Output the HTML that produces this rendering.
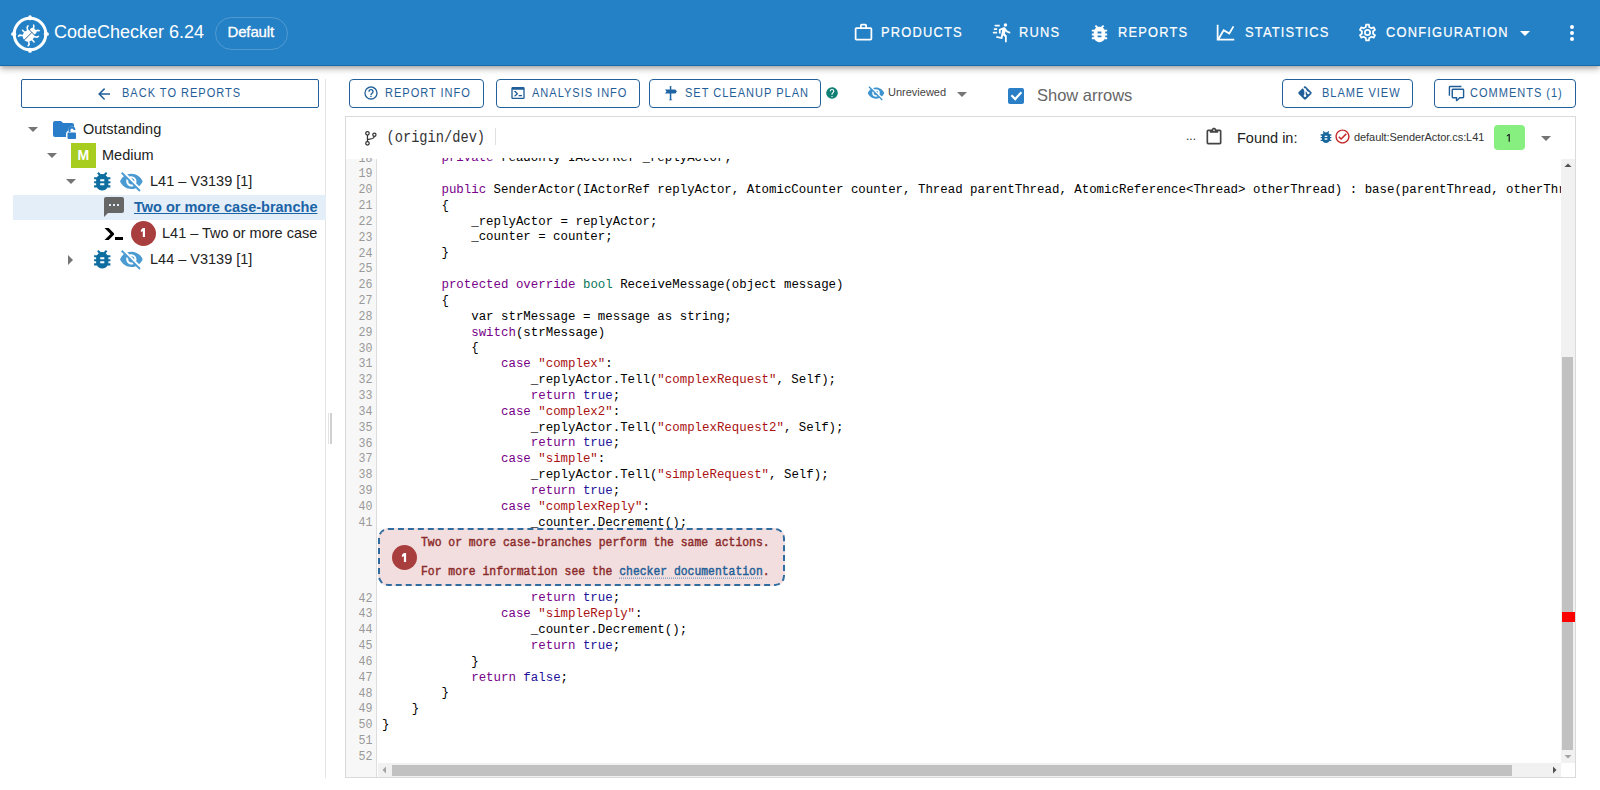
<!DOCTYPE html>
<html><head><meta charset="utf-8">
<style>
*{box-sizing:border-box;margin:0;padding:0}
html,body{width:1600px;height:790px;overflow:hidden;background:#fff;font-family:"Liberation Sans",sans-serif;position:relative}
.abs{position:absolute}
.t{position:absolute;white-space:nowrap;line-height:0}
svg{position:absolute;display:block}
/* header */
#hdr{position:absolute;left:0;top:0;width:1600px;height:66px;background:#2581c6;border-bottom:1px solid #1b69ad;box-shadow:0 2px 4px -1px rgba(0,0,0,.2),0 4px 5px 0 rgba(0,0,0,.14),0 1px 10px 0 rgba(0,0,0,.12);z-index:5}
.nav{position:absolute;color:#fff;font-size:14px;letter-spacing:1.3px;transform:scaleX(0.92);transform-origin:0 0;-webkit-text-stroke:0.2px #fff;line-height:0;white-space:nowrap;font-weight:normal}
.btn{position:absolute;border:1px solid #22609b;border-radius:4px;background:#fff}
.btxt{position:absolute;color:#1f5e98;font-size:12px;letter-spacing:1.07px;transform:scaleX(0.92);transform-origin:0 0;line-height:0;white-space:nowrap}
.tree{position:absolute;font-size:14.5px;color:#222;line-height:0;white-space:nowrap}
/* code */
#cv{position:absolute;left:345px;top:116px;width:1231px;height:662px;border:1px solid #dadada;background:#fff}
#vp{position:absolute;left:346px;top:158px;width:1215px;height:605px;overflow:hidden}
#gut{position:absolute;left:0;top:0.5px;width:31px;height:605px;background:#f7f7f7;border-right:1px solid #ddd}
.cl{position:absolute;left:35.9px;padding-top:1.3px;height:15.83px;line-height:15.83px;font-family:"Liberation Mono",monospace;font-size:12.42px;color:#000;white-space:pre}
.ln{position:absolute;left:0;width:26.5px;text-align:right;height:15.83px;line-height:15.83px;font-family:"Liberation Mono",monospace;font-size:11.6px;color:#999;white-space:pre;transform:scaleY(1.14)}
.ck{color:#770088}.ct{color:#07775a}.cs{color:#aa1111}.ca{color:#221199}
</style></head><body>

<!-- HEADER -->
<div id="hdr">
  <svg style="left:9.6px;top:13.6px" width="40" height="40" viewBox="-20 -20 40 40">
    <circle cx="0" cy="0" r="15.8" fill="none" stroke="#fff" stroke-width="3"/>
    <rect x="-1.7" y="-18.8" width="3.4" height="5" rx="1.5" fill="#fff"/>
    <rect x="-1.7" y="13.8" width="3.4" height="5" rx="1.5" fill="#fff"/>
    <rect x="-18.8" y="-1.7" width="5" height="3.4" rx="1.5" fill="#fff"/>
    <rect x="13.8" y="-1.7" width="5" height="3.4" rx="1.5" fill="#fff"/>
    <g transform="translate(0,0.3) rotate(45) scale(0.82)">
      <ellipse cx="0" cy="2.6" rx="6.8" ry="7.4" fill="#fff"/>
      <ellipse cx="0" cy="-5.6" rx="4.4" ry="3.2" fill="#fff"/>
      <g stroke="#fff" stroke-width="1.9" fill="none" stroke-linecap="round">
        <path d="M-2.2,-8 Q-3,-10.5 -4.8,-11"/><path d="M2.2,-8 Q3,-10.5 4.8,-11"/>
        <path d="M-5.5,-1.5 L-8.5,-3.5 L-9,-5.5"/><path d="M5.5,-1.5 L8.5,-3.5 L9,-5.5"/>
        <path d="M-6.5,3 L-10,3"/><path d="M6.5,3 L10,3"/>
        <path d="M-5.3,7.5 L-8,9.5 L-8.3,11.5"/><path d="M5.3,7.5 L8,9.5 L8.3,11.5"/>
      </g>
      <path d="M-4.4,-3.2 L4.4,-3.2 M0,-3.2 L0,10" stroke="#1d4f7a" stroke-width="1" fill="none"/>
    </g>
  </svg>
  <div class="t" style="left:54px;top:32px;font-size:18px;color:#fff">CodeChecker 6.24</div>
  <div class="abs" style="left:214.5px;top:16.5px;width:73px;height:33px;border:1px solid rgba(255,255,255,.2);border-radius:17px"></div>
  <div class="t" style="left:227.5px;top:32.4px;font-size:15px;color:#fff;-webkit-text-stroke:0.3px #fff;letter-spacing:-0.15px">Default</div>

  <!-- nav -->
  <svg style="left:853px;top:22px" width="21" height="21" viewBox="0 0 24 24"><path fill="#fff" d="M10,2H14A2,2 0 0,1 16,4V6H20A2,2 0 0,1 22,8V19A2,2 0 0,1 20,21H4C2.89,21 2,20.1 2,19V8C2,6.89 2.89,6 4,6H8V4C8,2.89 8.89,2 10,2M14,6V4H10V6H14M4,8V19H20V8H4Z"/></svg>
  <div class="nav" style="left:881px;top:32px">PRODUCTS</div>
  <svg style="left:991px;top:22px" width="21" height="21" viewBox="0 0 24 24"><path fill="#fff" d="M16.5,5.5A2,2 0 0,0 18.5,3.5A2,2 0 0,0 16.5,1.5A2,2 0 0,0 14.5,3.5A2,2 0 0,0 16.5,5.5M12.9,19.4L13.9,15L16,17V23H18V15.5L15.9,13.5L16.5,10.5C17.89,12.09 19.89,13 22,13V11C20.24,11.03 18.6,10.11 17.7,8.6L16.7,7C16.34,6.4 15.7,6 15,6C14.7,6 14.5,6.1 14.2,6.1L9,8.3V13H11V9.6L12.8,8.9L11.2,17L6.3,16L5.9,18L12.9,19.4M4,9A1,1 0 0,1 3,8A1,1 0 0,1 4,7H7V9H4M5,5A1,1 0 0,1 4,4A1,1 0 0,1 5,3H10V5H5M3,13A1,1 0 0,1 2,12A1,1 0 0,1 3,11H7V13H3Z"/></svg>
  <div class="nav" style="left:1019px;top:32px">RUNS</div>
  <svg style="left:1088px;top:21.5px" width="23" height="23" viewBox="0 0 24 24"><path fill="#fff" d="M14,12H10V10H14M14,16H10V14H14M20,8H17.19C16.74,7.22 16.12,6.55 15.37,6.04L17,4.41L15.59,3L13.42,5.17C12.96,5.06 12.5,5 12,5C11.5,5 11.04,5.06 10.59,5.17L8.41,3L7,4.41L8.62,6.04C7.88,6.55 7.26,7.22 6.81,8H4V10H6.09C6.04,10.33 6,10.66 6,11V12H4V14H6V15C6,15.34 6.04,15.67 6.09,16H4V18H6.81C7.85,19.79 9.78,21 12,21C14.22,21 16.150,19.79 17.19,18H20V16H17.91C17.96,15.67 18,15.34 18,15V14H20V12H18V11C18,10.66 17.96,10.33 17.91,10H20V8Z"/></svg>
  <div class="nav" style="left:1118px;top:32px">REPORTS</div>
  <svg style="left:1215px;top:22px" width="21" height="21" viewBox="0 0 24 24"><path fill="#fff" d="M16,11.78L20.24,4.45L21.97,5.45L16.74,14.5L10.23,10.75L5.46,19H22V21H2V3H4V17.54L9.5,8L16,11.78Z"/></svg>
  <div class="nav" style="left:1245px;top:32px">STATISTICS</div>
  <svg style="left:1357px;top:22px" width="21" height="21" viewBox="0 0 24 24"><path fill="#fff" d="M12,8A4,4 0 0,1 16,12A4,4 0 0,1 12,16A4,4 0 0,1 8,12A4,4 0 0,1 12,8M12,10A2,2 0 0,0 10,12A2,2 0 0,0 12,14A2,2 0 0,0 14,12A2,2 0 0,0 12,10M10,22C9.75,22 9.54,21.82 9.5,21.58L9.13,18.93C8.5,18.68 7.96,18.34 7.44,17.94L4.95,18.95C4.73,19.03 4.46,18.95 4.34,18.73L2.34,15.27C2.21,15.05 2.27,14.78 2.46,14.63L4.57,12.97L4.5,12L4.57,11L2.46,9.37C2.27,9.22 2.21,8.95 2.34,8.73L4.34,5.27C4.46,5.05 4.73,4.96 4.95,5.05L7.44,6.05C7.96,5.66 8.5,5.32 9.13,5.07L9.5,2.42C9.54,2.18 9.75,2 10,2H14C14.25,2 14.46,2.18 14.5,2.42L14.87,5.07C15.5,5.32 16.04,5.66 16.56,6.05L19.05,5.05C19.27,4.96 19.54,5.05 19.66,5.27L21.66,8.73C21.79,8.95 21.73,9.22 21.54,9.37L19.43,11L19.5,12L19.43,13L21.54,14.63C21.73,14.78 21.79,15.05 21.66,15.27L19.66,18.73C19.54,18.95 19.27,19.04 19.05,18.95L16.56,17.95C16.04,18.34 15.5,18.68 14.87,18.93L14.5,21.58C14.46,21.82 14.25,22 14,22H10M11.25,4L10.88,6.61C9.68,6.86 8.62,7.5 7.85,8.39L5.44,7.35L4.69,8.65L6.8,10.2C6.4,11.37 6.4,12.64 6.8,13.8L4.68,15.36L5.43,16.66L7.86,15.62C8.63,16.5 9.68,17.14 10.87,17.38L11.24,20H12.76L13.13,17.39C14.32,17.14 15.37,16.5 16.14,15.62L18.57,16.66L19.32,15.36L17.2,13.81C17.6,12.64 17.6,11.37 17.2,10.2L19.31,8.65L18.56,7.35L16.15,8.39C15.38,7.5 14.32,6.86 13.12,6.62L12.75,4H11.25Z"/></svg>
  <div class="nav" style="left:1386px;top:32px">CONFIGURATION</div>
  <svg style="left:1513px;top:21px" width="24" height="24" viewBox="0 0 24 24"><path fill="#fff" d="M7,10L12,15L17,10H7Z"/></svg>
  <svg style="left:1560px;top:21px" width="24" height="24" viewBox="0 0 24 24"><path fill="#fff" d="M12,16A2,2 0 0,1 14,18A2,2 0 0,1 12,20A2,2 0 0,1 10,18A2,2 0 0,1 12,16M12,10A2,2 0 0,1 14,12A2,2 0 0,1 12,14A2,2 0 0,1 10,12A2,2 0 0,1 12,10M12,4A2,2 0 0,1 14,6A2,2 0 0,1 12,8A2,2 0 0,1 10,6A2,2 0 0,1 12,4Z"/></svg>
</div>

<!-- LEFT PANEL -->
<div class="btn" style="left:21px;top:79px;width:298px;height:29px;border-radius:2px"></div>
<svg style="left:95.2px;top:85px" width="18" height="18" viewBox="0 0 24 24"><path fill="#1f5e98" d="M20,11V13H8L13.5,18.5L12.08,19.92L4.16,12L12.08,4.08L13.5,5.5L8,11H20Z"/></svg>
<div class="btxt" style="left:122px;top:93px">BACK TO REPORTS</div>
<div class="abs" style="left:325px;top:79px;width:1px;height:699px;background:#e4e4e4"></div>
<div class="abs" style="left:328px;top:413px;width:1px;height:31px;background:#e2e2e2"></div><div class="abs" style="left:330px;top:413px;width:2px;height:31px;background:#d0d0d0"></div>

<!-- tree -->
<svg style="left:21.3px;top:117px" width="24" height="24" viewBox="0 0 24 24"><path fill="#757575" d="M7,10L12,15L17,10H7Z"/></svg>
<svg style="left:52px;top:118px" width="26" height="24" viewBox="0 0 26 24">
  <path fill="#2a7dc8" d="M9,3H3C1.9,3 1,3.9 1,5V17A2,2 0 0,0 3,19H14V16C14,14.5 15,13 16.5,12.5V12C16.5,10 18,8.5 20,8.5C21,8.5 22,8.9 22,9V7C22,5.9 21.1,5 20,5H11Z"/>
  <path fill="none" stroke="#2a7dc8" stroke-width="1.8" d="M17.5,14V12A2.5,2.5 0 0,1 22.5,12"/>
  <rect x="15.5" y="14.5" width="8.5" height="6.5" rx="1" fill="#2a7dc8"/>
</svg>
<div class="tree" style="left:83px;top:129.4px">Outstanding</div>

<svg style="left:40.3px;top:143px" width="24" height="24" viewBox="0 0 24 24"><path fill="#757575" d="M7,10L12,15L17,10H7Z"/></svg>
<div class="abs" style="left:71px;top:143px;width:24.5px;height:24.5px;background:#a6cd20"></div>
<div class="t" style="left:77.5px;top:155px;font-size:14px;font-weight:bold;color:#fff">M</div>
<div class="tree" style="left:102px;top:155px">Medium</div>

<svg style="left:59px;top:168.8px" width="24" height="24" viewBox="0 0 24 24"><path fill="#757575" d="M7,10L12,15L17,10H7Z"/></svg>
<svg style="left:89.9px;top:169px" width="24.5" height="24.5" viewBox="0 0 24 24"><path fill="#0f6ea0" d="M14,12H10V10H14M14,16H10V14H14M20,8H17.19C16.74,7.22 16.12,6.55 15.37,6.04L17,4.41L15.59,3L13.42,5.17C12.96,5.06 12.5,5 12,5C11.5,5 11.04,5.06 10.59,5.17L8.41,3L7,4.41L8.62,6.04C7.88,6.55 7.26,7.22 6.81,8H4V10H6.09C6.04,10.33 6,10.66 6,11V12H4V14H6V15C6,15.34 6.04,15.67 6.09,16H4V18H6.81C7.85,19.79 9.78,21 12,21C14.22,21 16.15,19.79 17.19,18H20V16H17.91C17.96,15.67 18,15.34 18,15V14H20V12H18V11C18,10.66 17.96,10.33 17.91,10H20V8Z"/></svg>
<svg style="left:119px;top:168.5px" width="24.7" height="24.7" viewBox="0 0 24 24"><path fill="#4b9bd3" d="M11.83,9L15,12.16C15,12.11 15,12.05 15,12A3,3 0 0,0 12,9C11.94,9 11.89,9 11.83,9M7.53,9.8L9.08,11.35C9.03,11.56 9,11.77 9,12A3,3 0 0,0 12,15C12.22,15 12.44,14.97 12.65,14.92L14.2,16.47C13.53,16.8 12.79,17 12,17A5,5 0 0,1 7,12C7,11.21 7.2,10.47 7.53,9.8M2,4.27L4.28,6.55L4.73,7C3.08,8.3 1.78,10 1,12C2.73,16.39 7,19.5 12,19.5C13.55,19.5 15.030,19.2 16.38,18.66L16.81,19.08L19.73,22L21,20.73L3.27,3M12,7A5,5 0 0,1 17,12C17,12.64 16.87,13.26 16.64,13.82L19.57,16.75C21.07,15.5 22.27,13.86 23,12C21.27,7.61 17,4.5 12,4.5C10.6,4.5 9.26,4.75 8,5.2L10.17,7.350C10.74,7.13 11.35,7 12,7Z"/></svg>
<div class="tree" style="left:150px;top:181px">L41 – V3139 [1]</div>

<div class="abs" style="left:13px;top:195px;width:312.5px;height:25px;background:#e4eef8"></div>
<svg style="left:102px;top:195px" width="24" height="24" viewBox="0 0 24 24"><path fill="#666" d="M20,2H4A2,2 0 0,0 2,4V22L6,18H20A2,2 0 0,0 22,16V4A2,2 0 0,0 20,2M17,11H15V9H17M13,11H11V9H13M9,11H7V9H9"/></svg>
<div class="tree" style="left:134px;top:206.5px;font-weight:bold;color:#1b64a6;text-decoration:underline">Two or more case-branche</div>

<svg style="left:102px;top:221px" width="24" height="24" viewBox="0 0 24 24"><path fill="#000" d="M13,19V16H21V19H13M8.5,13L2.47,7H6.71L11.67,11.95C12.25,12.54 12.25,13.5 11.670,14.07L6.74,19H2.5L8.5,13Z"/></svg>
<div class="abs" style="left:131px;top:221px;width:25px;height:25px;border-radius:50%;background:#a93e3e"></div>
<svg style="left:138px;top:226px" width="10" height="14" viewBox="0 0 10 14"><path fill="#fff" d="M4.8,2.1 H7.0 V11.1 H4.8 V5.2 L2.9,6.1 V4.1 Z"/></svg>
<div class="tree" style="left:162px;top:233px">L41 – Two or more case</div>

<svg style="left:58.3px;top:247.6px" width="24" height="24" viewBox="0 0 24 24"><path fill="#757575" d="M10,17L15,12L10,7V17Z"/></svg>
<svg style="left:89.9px;top:247.2px" width="24.5" height="24.5" viewBox="0 0 24 24"><path fill="#0f6ea0" d="M14,12H10V10H14M14,16H10V14H14M20,8H17.19C16.74,7.22 16.12,6.55 15.37,6.04L17,4.41L15.59,3L13.42,5.17C12.96,5.06 12.5,5 12,5C11.5,5 11.04,5.06 10.59,5.17L8.41,3L7,4.41L8.62,6.04C7.88,6.55 7.26,7.22 6.81,8H4V10H6.09C6.04,10.33 6,10.66 6,11V12H4V14H6V15C6,15.34 6.04,15.67 6.09,16H4V18H6.81C7.85,19.79 9.78,21 12,21C14.22,21 16.15,19.79 17.19,18H20V16H17.91C17.96,15.67 18,15.34 18,15V14H20V12H18V11C18,10.66 17.96,10.33 17.91,10H20V8Z"/></svg>
<svg style="left:119px;top:246.7px" width="24.7" height="24.7" viewBox="0 0 24 24"><path fill="#4b9bd3" d="M11.83,9L15,12.16C15,12.11 15,12.05 15,12A3,3 0 0,0 12,9C11.94,9 11.89,9 11.83,9M7.53,9.8L9.08,11.35C9.03,11.56 9,11.77 9,12A3,3 0 0,0 12,15C12.22,15 12.44,14.97 12.65,14.92L14.2,16.47C13.53,16.8 12.79,17 12,17A5,5 0 0,1 7,12C7,11.21 7.2,10.47 7.53,9.8M2,4.27L4.28,6.55L4.73,7C3.08,8.3 1.78,10 1,12C2.73,16.39 7,19.5 12,19.5C13.55,19.5 15.03,19.2 16.38,18.66L16.81,19.08L19.73,22L21,20.73L3.27,3M12,7A5,5 0 0,1 17,12C17,12.64 16.87,13.26 16.64,13.82L19.57,16.75C21.07,15.5 22.27,13.86 23,12C21.27,7.61 17,4.5 12,4.5C10.6,4.5 9.26,4.75 8,5.2L10.17,7.35C10.74,7.13 11.35,7 12,7Z"/></svg>
<div class="tree" style="left:150px;top:259px">L44 – V3139 [1]</div>

<!-- TOOLBAR -->
<div class="btn" style="left:349px;top:79px;width:135px;height:29px"></div>
<svg style="left:363px;top:85px" width="16" height="16" viewBox="0 0 24 24"><path fill="#1f5e98" d="M11,18H13V16H11V18M12,2A10,10 0 0,0 2,12A10,10 0 0,0 12,22A10,10 0 0,0 22,12A10,10 0 0,0 12,2M12,20C7.59,20 4,16.41 4,12C4,7.59 7.59,4 12,4C16.41,4 20,7.59 20,12C20,16.41 16.41,20 12,20M12,6A4,4 0 0,0 8,10H10A2,2 0 0,1 12,8A2,2 0 0,1 14,10C14,12 11,11.75 11,15H13C13,12.75 16,12.5 16,10A4,4 0 0,0 12,6Z"/></svg>
<div class="btxt" style="left:385px;top:93px">REPORT INFO</div>

<div class="btn" style="left:496px;top:79px;width:144px;height:29px"></div>
<svg style="left:510px;top:85px" width="16" height="16" viewBox="0 0 24 24"><path fill="#1f5e98" d="M20,19V7H4V19H20M20,3A2,2 0 0,1 22,5V19A2,2 0 0,1 20,21H4A2,2 0 0,1 2,19V5C2,3.89 2.9,3 4,3H20M13,17V15H18V17H13M9.58,13L5.57,9H8.4L11.7,12.3C12.09,12.69 12.09,13.33 11.7,13.72L8.42,17H5.59L9.58,13Z"/></svg>
<div class="btxt" style="left:532px;top:93px">ANALYSIS INFO</div>

<div class="btn" style="left:649px;top:79px;width:172px;height:29px"></div>
<svg style="left:663px;top:84px" width="16" height="18" viewBox="0 0 16 18"><rect x="6.8" y="2" width="1.5" height="14" fill="#1f64a3"/><polygon points="2,5.5 12.4,5.5 13.9,7.5 12.4,9.6 2,9.6 3.5,7.5" fill="#1f64a3"/><path d="M5.6,16.2 Q7.55,14.2 9.5,16.2Z" fill="#1f64a3"/></svg>
<div class="btxt" style="left:684.5px;top:93px">SET CLEANUP PLAN</div>
<svg style="left:825px;top:86px" width="14" height="14" viewBox="0 0 24 24"><path fill="#0f7f74" d="M15.07,11.25L14.17,12.17C13.45,12.89 13,13.5 13,15H11V14.5C11,13.39 11.45,12.39 12.17,11.67L13.41,10.41C13.78,10.05 14,9.55 14,9C14,7.89 13.1,7 12,7A2,2 0 0,0 10,9H8A4,4 0 0,1 12,5A4,4 0 0,1 16,9C16,9.88 15.64,10.67 15.07,11.25M13,19H11V17H13M12,2A10,10 0 0,0 2,12A10,10 0 0,0 12,22A10,10 0 0,0 22,12C22,6.47 17.5,2 12,2Z"/></svg>

<svg style="left:867px;top:84px" width="18" height="18" viewBox="0 0 24 24"><path fill="#3d93cf" d="M11.83,9L15,12.16C15,12.11 15,12.05 15,12A3,3 0 0,0 12,9C11.94,9 11.89,9 11.83,9M7.53,9.8L9.08,11.35C9.03,11.56 9,11.77 9,12A3,3 0 0,0 12,15C12.22,15 12.44,14.97 12.65,14.92L14.2,16.47C13.53,16.8 12.79,17 12,17A5,5 0 0,1 7,12C7,11.21 7.2,10.47 7.53,9.8M2,4.27L4.28,6.55L4.73,7C3.08,8.3 1.78,10 1,12C2.73,16.39 7,19.5 12,19.5C13.55,19.5 15.03,19.2 16.38,18.66L16.81,19.08L19.73,22L21,20.73L3.27,3M12,7A5,5 0 0,1 17,12C17,12.64 16.87,13.26 16.64,13.82L19.57,16.75C21.07,15.5 22.27,13.86 23,12C21.27,7.61 17,4.5 12,4.5C10.6,4.5 9.26,4.75 8,5.2L10.17,7.35C10.74,7.13 11.35,7 12,7Z"/></svg>
<div class="t" style="left:888px;top:91.8px;font-size:11px;color:#444">Unreviewed</div>
<svg style="left:950px;top:82px" width="24" height="24" viewBox="0 0 24 24"><path fill="#757575" d="M7,10L12,15L17,10H7Z"/></svg>

<div class="abs" style="left:1008px;top:88px;width:16px;height:16px;background:#2a7fc6;border-radius:2px"></div>
<svg style="left:1008px;top:88px" width="16" height="16" viewBox="0 0 16 16"><path d="M3.4 7.3 L7.2 11.1 L13.4 4.2" stroke="#fff" stroke-width="2.2" fill="none"/></svg>
<div class="t" style="left:1037px;top:95px;font-size:16.5px;color:#666">Show arrows</div>

<div class="btn" style="left:1282px;top:79px;width:131px;height:29px"></div>
<svg style="left:1297px;top:85px" width="16" height="16" viewBox="0 0 24 24"><path fill="#1f5e98" d="M2.6,10.59L8.38,4.8L10.07,6.5C9.83,7.35 10.22,8.28 11,8.73V14.27C10.4,14.61 10,15.26 10,16A2,2 0 0,0 12,18A2,2 0 0,0 14,16C14,15.26 13.6,14.61 13,14.27V9.41L15.07,11.5C15,11.65 15,11.82 15,12A2,2 0 0,0 17,14A2,2 0 0,0 19,12A2,2 0 0,0 17,10C16.82,10 16.65,10 16.5,10.07L13.93,7.5C14.19,6.57 13.71,5.55 12.78,5.16C12.35,5 11.9,4.96 11.5,5.07L9.8,3.38L10.59,2.6C11.37,1.81 12.63,1.81 13.41,2.6L21.4,10.59C22.19,11.37 22.19,12.63 21.4,13.41L13.41,21.4C12.63,22.19 11.37,22.19 10.59,21.4L2.6,13.41C1.81,12.63 1.81,11.37 2.6,10.59Z"/></svg>
<div class="btxt" style="left:1322px;top:92.6px">BLAME VIEW</div>

<div class="btn" style="left:1434px;top:79px;width:142px;height:29px"></div>
<svg style="left:1448px;top:85px" width="17" height="17" viewBox="0 0 24 24"><path fill="#1f5e98" d="M12,23A1,1 0 0,1 11,22V19H7A2,2 0 0,1 5,17V7A2,2 0 0,1 7,5H21A2,2 0 0,1 23,7V17A2,2 0 0,1 21,19H16.9L13.2,22.71C13,22.89 12.76,23 12.5,23H12M13,17V20.08L16.08,17H21V7H7V17H13M3,15H1V3A2,2 0 0,1 3,1H19V3H3V15Z"/></svg>
<div class="btxt" style="left:1470px;top:93px">COMMENTS (1)</div>

<!-- CODE VIEWER -->
<div id="cv"></div>
<svg style="left:360px;top:126px" width="24" height="24" viewBox="0 0 24 24"><g fill="none" stroke="#333" stroke-width="1.25"><circle cx="7.45" cy="7.3" r="1.75"/><circle cx="7.45" cy="17.3" r="1.75"/><circle cx="14.4" cy="8.7" r="1.6"/><path d="M7.45 9.05 V15.55 M14.3 10.3 Q14.1 12.1 12.6 12.5 L7.5 13.7"/></g></svg>
<div class="t" style="left:386.5px;top:139px;font-family:'Liberation Mono',monospace;font-size:13.7px;color:#333;transform:scaleY(1.15)">(origin/dev)</div>
<div class="abs" style="left:495px;top:128px;width:1px;height:17px;background:#e0e0e0"></div>

<div class="t" style="left:1186px;top:136px;font-size:12px;color:#333">...</div>
<svg style="left:1203.5px;top:127px" width="20" height="18.33" viewBox="0 0 24 22"><path fill="#444" d="M19,3H14.82C14.4,1.84 13.3,1 12,1C10.7,1 9.6,1.84 9.18,3H5A2,2 0 0,0 3,5V19A2,2 0 0,0 5,21H19A2,2 0 0,0 21,19V5A2,2 0 0,0 19,3M12,3A1,1 0 0,1 13,4A1,1 0 0,1 12,5A1,1 0 0,1 11,4A1,1 0 0,1 12,3M7,7H17V5H19V19H5V5H7V7Z"/></svg>
<div class="t" style="left:1237px;top:137.5px;font-size:14.5px;color:#222">Found in:</div>
<svg style="left:1318px;top:129px" width="16" height="16" viewBox="0 0 24 24"><path fill="#17679c" d="M14,12H10V10H14M14,16H10V14H14M20,8H17.19C16.74,7.22 16.12,6.55 15.37,6.04L17,4.41L15.59,3L13.42,5.17C12.96,5.06 12.5,5 12,5C11.5,5 11.04,5.06 10.59,5.17L8.41,3L7,4.41L8.62,6.04C7.88,6.55 7.26,7.22 6.81,8H4V10H6.09C6.04,10.33 6,10.66 6,11V12H4V14H6V15C6,15.34 6.04,15.67 6.09,16H4V18H6.81C7.85,19.79 9.78,21 12,21C14.22,21 16.15,19.79 17.19,18H20V16H17.91C17.96,15.67 18,15.34 18,15V14H20V12H18V11C18,10.66 17.96,10.33 17.91,10H20V8Z"/></svg>
<svg style="left:1334px;top:128px" width="17" height="17" viewBox="0 0 24 24"><path fill="#c62828" d="M12 2C6.5 2 2 6.5 2 12S6.5 22 12 22 22 17.5 22 12 17.5 2 12 2M12 20C7.59 20 4 16.41 4 12S7.59 4 12 4 20 7.59 20 12 16.41 20 12 20M16.59 7.58L10 14.17L7.41 11.59L6 13L10 17L18 9L16.59 7.58Z"/></svg>
<div class="t" style="left:1354px;top:136.5px;font-size:11px;color:#333;letter-spacing:-0.07px">default:SenderActor.cs:L41</div>
<div class="abs" style="left:1493.5px;top:125px;width:31.5px;height:25px;background:#86ef80;border-radius:4px"></div>
<svg style="left:1504px;top:131px" width="10" height="14" viewBox="0 0 10 14"><path fill="#222" d="M4.6,2.9 H5.85 V10.8 H4.6 V4.5 L2.8,5.5 V4.4 Z"/></svg>
<svg style="left:1534px;top:126px" width="24" height="24" viewBox="0 0 24 24"><path fill="#757575" d="M7,10L12,15L17,10H7Z"/></svg>

<div id="vp">
  <div id="gut">
<div class="ln" style="top:-8.00px">18</div>
<div class="ln" style="top:7.84px">19</div>
<div class="ln" style="top:23.68px">20</div>
<div class="ln" style="top:39.52px">21</div>
<div class="ln" style="top:55.36px">22</div>
<div class="ln" style="top:71.20px">23</div>
<div class="ln" style="top:87.04px">24</div>
<div class="ln" style="top:102.88px">25</div>
<div class="ln" style="top:118.72px">26</div>
<div class="ln" style="top:134.56px">27</div>
<div class="ln" style="top:150.40px">28</div>
<div class="ln" style="top:166.24px">29</div>
<div class="ln" style="top:182.08px">30</div>
<div class="ln" style="top:197.92px">31</div>
<div class="ln" style="top:213.76px">32</div>
<div class="ln" style="top:229.60px">33</div>
<div class="ln" style="top:245.44px">34</div>
<div class="ln" style="top:261.28px">35</div>
<div class="ln" style="top:277.12px">36</div>
<div class="ln" style="top:292.96px">37</div>
<div class="ln" style="top:308.80px">38</div>
<div class="ln" style="top:324.64px">39</div>
<div class="ln" style="top:340.48px">40</div>
<div class="ln" style="top:356.32px">41</div>
<div class="ln" style="top:432.06px">42</div>
<div class="ln" style="top:447.90px">43</div>
<div class="ln" style="top:463.74px">44</div>
<div class="ln" style="top:479.58px">45</div>
<div class="ln" style="top:495.42px">46</div>
<div class="ln" style="top:511.26px">47</div>
<div class="ln" style="top:527.10px">48</div>
<div class="ln" style="top:542.94px">49</div>
<div class="ln" style="top:558.78px">50</div>
<div class="ln" style="top:574.62px">51</div>
<div class="ln" style="top:590.46px">52</div>
  </div>
<div class="cl" style="top:-8.00px">        <span class="ck">private</span> readonly IActorRef _replyActor;</div>
<div class="cl" style="top:7.84px"></div>
<div class="cl" style="top:23.68px">        <span class="ck">public</span> SenderActor(IActorRef replyActor, AtomicCounter counter, Thread parentThread, AtomicReference&lt;Thread&gt; otherThread) : base(parentThread, otherThread)</div>
<div class="cl" style="top:39.52px">        {</div>
<div class="cl" style="top:55.36px">            _replyActor = replyActor;</div>
<div class="cl" style="top:71.20px">            _counter = counter;</div>
<div class="cl" style="top:87.04px">        }</div>
<div class="cl" style="top:102.88px"></div>
<div class="cl" style="top:118.72px">        <span class="ck">protected</span> <span class="ck">override</span> <span class="ct">bool</span> ReceiveMessage(object message)</div>
<div class="cl" style="top:134.56px">        {</div>
<div class="cl" style="top:150.40px">            var strMessage = message as string;</div>
<div class="cl" style="top:166.24px">            <span class="ck">switch</span>(strMessage)</div>
<div class="cl" style="top:182.08px">            {</div>
<div class="cl" style="top:197.92px">                <span class="ck">case</span> <span class="cs">"complex"</span>:</div>
<div class="cl" style="top:213.76px">                    _replyActor.Tell(<span class="cs">"complexRequest"</span>, Self);</div>
<div class="cl" style="top:229.60px">                    <span class="ck">return</span> <span class="ca">true</span>;</div>
<div class="cl" style="top:245.44px">                <span class="ck">case</span> <span class="cs">"complex2"</span>:</div>
<div class="cl" style="top:261.28px">                    _replyActor.Tell(<span class="cs">"complexRequest2"</span>, Self);</div>
<div class="cl" style="top:277.12px">                    <span class="ck">return</span> <span class="ca">true</span>;</div>
<div class="cl" style="top:292.96px">                <span class="ck">case</span> <span class="cs">"simple"</span>:</div>
<div class="cl" style="top:308.80px">                    _replyActor.Tell(<span class="cs">"simpleRequest"</span>, Self);</div>
<div class="cl" style="top:324.64px">                    <span class="ck">return</span> <span class="ca">true</span>;</div>
<div class="cl" style="top:340.48px">                <span class="ck">case</span> <span class="cs">"complexReply"</span>:</div>
<div class="cl" style="top:356.32px">                    _counter.Decrement();</div>
<div class="cl" style="top:432.06px">                    <span class="ck">return</span> <span class="ca">true</span>;</div>
<div class="cl" style="top:447.90px">                <span class="ck">case</span> <span class="cs">"simpleReply"</span>:</div>
<div class="cl" style="top:463.74px">                    _counter.Decrement();</div>
<div class="cl" style="top:479.58px">                    <span class="ck">return</span> <span class="ca">true</span>;</div>
<div class="cl" style="top:495.42px">            }</div>
<div class="cl" style="top:511.26px">            <span class="ck">return</span> <span class="ca">false</span>;</div>
<div class="cl" style="top:527.10px">        }</div>
<div class="cl" style="top:542.94px">    }</div>
<div class="cl" style="top:558.78px">}</div>
<div class="cl" style="top:574.62px"></div>
<div class="cl" style="top:590.46px"></div>
  <!-- widget -->
  <div class="abs" style="left:32px;top:372.16px;width:407px;height:60px">
    <div class="abs" style="left:0;top:-2.3px;width:407px;height:58px;background:#f2dede;border:2px dashed #2f6c9f;border-radius:10px"></div>
    <div class="abs" style="left:14px;top:15px;width:25px;height:25px;border-radius:50%;background:#a93e3e"></div>
    <svg style="left:21px;top:20.5px" width="10" height="14" viewBox="0 0 10 14"><path fill="#fff" d="M4.8,2.1 H7.1 V11.1 H4.9 V5.2 L2.9,6.1 V4.1 Z"/></svg>
    <div class="t" style="left:43px;top:13.3px;font-family:'Liberation Mono',monospace;font-size:11.4px;color:#8b2a2a;-webkit-text-stroke:0.4px #8b2a2a;transform:scaleY(1.12)">Two or more case-branches perform the same actions.</div>
    <div class="t" style="left:43px;top:42.1px;font-family:'Liberation Mono',monospace;font-size:11.4px;color:#8b2a2a;-webkit-text-stroke:0.4px #8b2a2a;transform:scaleY(1.12)">For more information see the <span style="color:#1f5e98;-webkit-text-stroke:0.4px #1f5e98;text-decoration:underline dotted #7a9cbf;text-underline-offset:2px">checker documentation</span>.</div>
  </div>
  <!-- scrollbars -->
  <div class="abs" style="left:1215px;top:0;width:14px;height:604px;background:#f1f1f1"></div>
</div>
<!-- vertical scrollbar -->
<div class="abs" style="left:1561px;top:159px;width:14px;height:604px;background:#f1f1f1"></div>
<svg style="left:1564px;top:162px" width="8" height="6" viewBox="0 0 8 6"><path fill="#505050" d="M0.5 5 L4 1.5 L7.5 5Z"/></svg>
<div class="abs" style="left:1562px;top:357px;width:11px;height:393px;background:#c1c1c1"></div>
<div class="abs" style="left:1562px;top:612px;width:13px;height:10px;background:#ff0000"></div>
<svg style="left:1564px;top:754px" width="8" height="6" viewBox="0 0 8 6"><path fill="#a3a3a3" d="M0.5 1 L4 4.5 L7.5 1Z"/></svg>
<!-- horizontal scrollbar -->
<div class="abs" style="left:378px;top:763px;width:1183px;height:14px;background:#f1f1f1"></div>
<svg style="left:381px;top:766px" width="6" height="8" viewBox="0 0 6 8"><path fill="#a3a3a3" d="M5 0.5 L1.5 4 L5 7.5Z"/></svg>
<div class="abs" style="left:392px;top:765px;width:1120px;height:11px;background:#c1c1c1"></div>
<svg style="left:1552.3px;top:766px" width="6" height="8" viewBox="0 0 6 8"><path fill="#505050" d="M1 0.5 L4.5 4 L1 7.5Z"/></svg>
<div class="abs" style="left:346px;top:763px;width:31px;height:14px;background:#f7f7f7;border-right:1px solid #ddd"></div>

</body></html>
